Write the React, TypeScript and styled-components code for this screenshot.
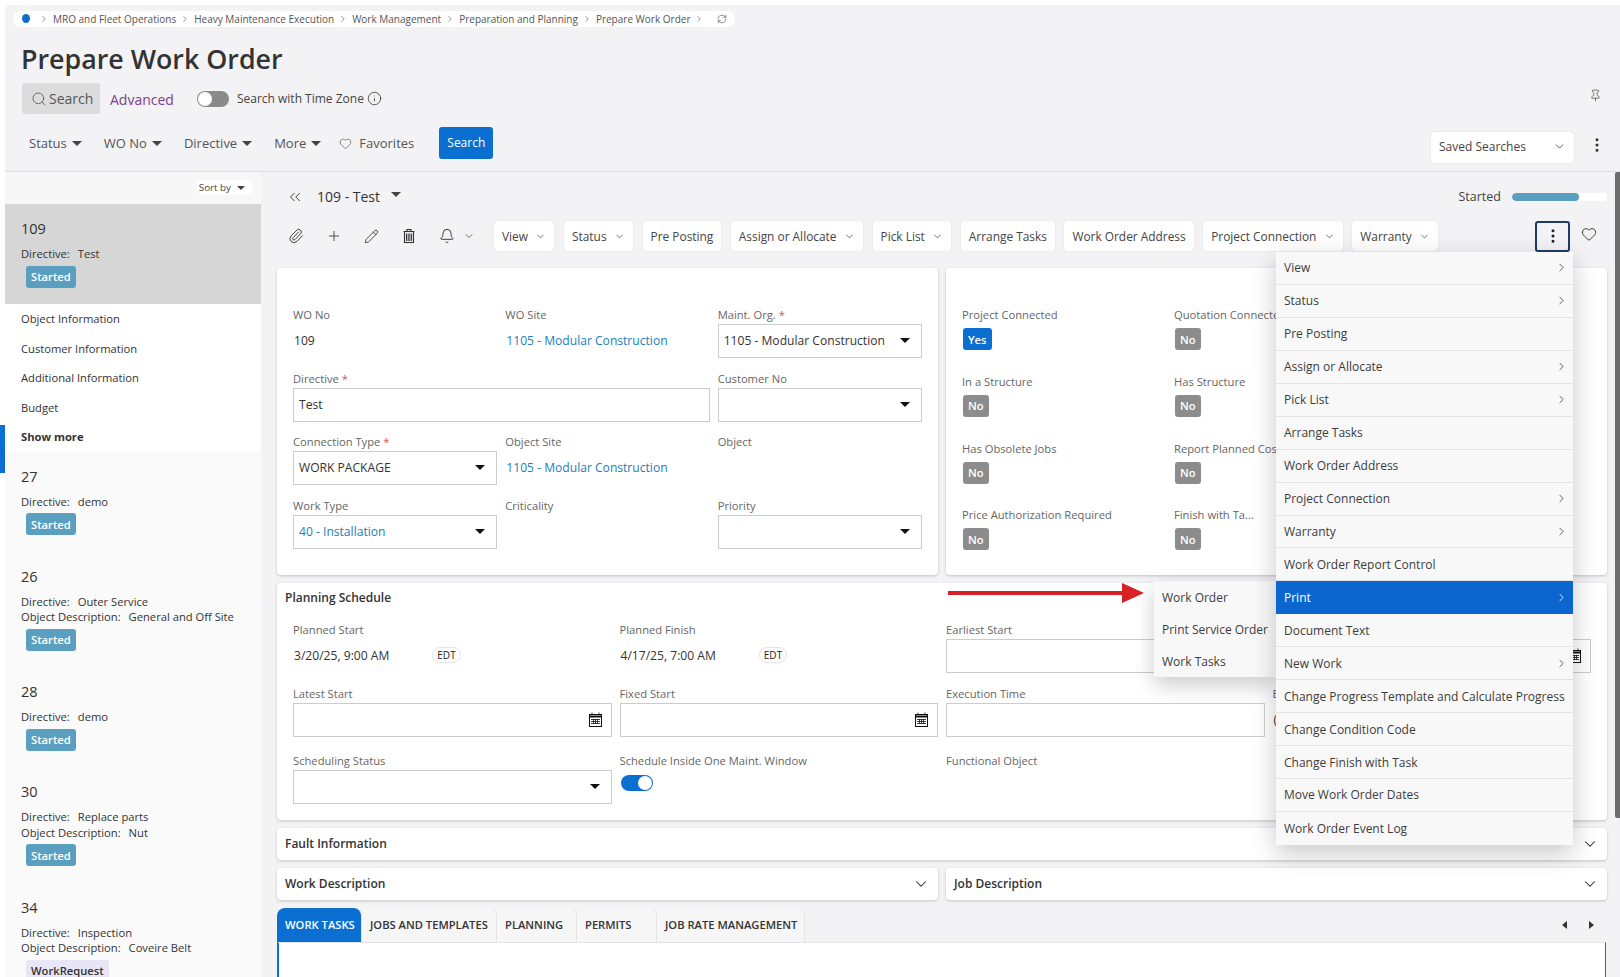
import React from "react";
import styled, {createGlobalStyle} from "styled-components";
import {
    Bell,
    ChevronDown,
    ChevronRight,
    ChevronsLeft,
    Heart,
    Info,
    MoreVertical,
    Paperclip,
    Pencil,
    Pin,
    Plus,
    RefreshCw,
    Search,
} from "lucide-react";

const GlobalStyle = createGlobalStyle`
    html, body {
        margin: 0;
        padding: 0;
        background: #fff;
        font-family: "Open Sans", "Liberation Sans", sans-serif;
        color: #333;
    }
    * {
        box-sizing: border-box;
    }
`;

const Page = styled.div`
    width: 1620px;
    height: 977px;
    padding: 5px 0 0 5px;
    overflow: hidden;
    background: #fff;
`;

const Frame = styled.div`
    position: relative;
    height: 972px;
    display: flex;
    flex-direction: column;
    background: #f3f2f5;
`;

/* header */

const Header = styled.header`
    height: 167px;
    flex: none;
    padding: 6px 0 0 8px;
    border-bottom: 1px solid #dcdcde;
`;

const Breadcrumb = styled.nav`
    display: flex;
    align-items: center;
    width: fit-content;
    height: 16px;
    padding: 0 8px 1px 9px;
    background: #fff;
    border-radius: 8px;
    font-size: 10px;
    color: #555;
    svg {
        color: #555;
    }
`;

const Dot = styled.span`
    width: 8px;
    height: 9px;
    border-radius: 50%;
    background: #0b6fd1;
    margin-right: 9px;
`;

const Crumb = styled.span`
    margin: 0 4px;
`;

const RefreshIcon = styled(RefreshCw)`
    margin-left: 13px;
`;

const Title = styled.h1`
    margin: 14px 0 0 8px;
    font-size: 26.8px;
    line-height: 36px;
    font-weight: 600;
    color: #333;
`;

const SearchRow = styled.div`
    display: flex;
    align-items: center;
    height: 31px;
    margin: 6px 0 0 9px;
    padding-right: 18px;
`;

const SearchTab = styled.div`
    display: flex;
    align-items: center;
    gap: 2px;
    width: 78px;
    height: 31px;
    padding-left: 9px;
    border-radius: 3px;
    background: #dcdcdc;
    font-size: 14px;
    color: #555;
`;

const Advanced = styled.span`
    margin: 2px 0 0 10px;
    font-size: 14px;
    color: #7b3f8c;
`;

const Toggle = styled.span<{$on?: boolean}>`
    display: flex;
    justify-content: ${(p) => (p.$on ? "flex-end" : "flex-start")};
    align-items: center;
    width: 32px;
    height: 16px;
    padding: 1px;
    border-radius: 8px;
    background: ${(p) => (p.$on ? "#0b6fd1" : "#8a8a8a")};
    &::after {
        content: "";
        width: 14px;
        height: 14px;
        border-radius: 50%;
        background: #fff;
    }
`;

const ZoneToggle = styled(Toggle)`
    margin-left: 23px;
`;

const ZoneLabel = styled.span`
    margin-left: 8px;
    font-size: 12px;
    color: #444;
`;

const InfoIcon = styled(Info)`
    margin-left: 3px;
    color: #333;
`;

const PinIcon = styled(Pin)`
    margin: -6px 0 0 auto;
    color: #555;
`;

const FilterRow = styled.div`
    display: flex;
    height: 35px;
    margin: 13px 0 0 16px;
    padding-right: 14px;
`;

const FilterItem = styled.div`
    display: flex;
    align-items: center;
    gap: 5px;
    height: 32px;
    margin-right: 22px;
    font-size: 13px;
    color: #555;
`;

const Caret = styled.span<{$size?: number; $color?: string}>`
    display: inline-block;
    flex: none;
    width: 0;
    height: 0;
    border-left: ${(p) => p.$size ?? 5}px solid transparent;
    border-right: ${(p) => p.$size ?? 5}px solid transparent;
    border-top: ${(p) => p.$size ?? 5}px solid ${(p) => p.$color ?? "#444"};
`;

const MoreItem = styled(FilterItem)`
    margin-right: 18px;
`;

const FavoriteItem = styled(FilterItem)`
    margin-right: 25px;
    gap: 7px;
`;

const PrimaryButton = styled.button`
    width: 54px;
    height: 32px;
    padding: 0 0 2px;
    border: 0;
    border-radius: 3px;
    background: #0b6fd1;
    color: #fff;
    font: 500 12px "Open Sans", sans-serif;
`;

const SavedSearches = styled.div`
    display: flex;
    align-items: center;
    justify-content: space-between;
    width: 143px;
    height: 31px;
    margin: 5px 0 0 auto;
    padding: 0 8px 2px 8px;
    background: #fff;
    border-radius: 3px;
    box-shadow: 0 0 1px rgba(0, 0, 0, 0.3);
    font-size: 12px;
    color: #444;
    svg {
        color: #333;
    }
`;

const HeaderKebab = styled(MoreVertical)`
    margin: 9px 0 0 14px;
    color: #333;
`;

/* sidebar */

const Body = styled.div`
    flex: 1;
    min-height: 0;
    display: flex;
`;

const Sidebar = styled.aside`
    position: relative;
    flex: none;
    width: 256px;
    background: #fafafa;
`;

const SidebarList = styled.div`
    height: 100%;
    overflow: hidden;
`;

const ScrollMark = styled.span`
    position: absolute;
    left: -5px;
    top: 253px;
    width: 5px;
    height: 48px;
    background: #0b6fd1;
`;

const SortRow = styled.div`
    display: flex;
    justify-content: flex-end;
    align-items: center;
    height: 32px;
    padding-right: 8px;
    background: #f7f7f8;
`;

const SortPill = styled.span`
    display: flex;
    align-items: center;
    gap: 6px;
    height: 15px;
    margin-top: -1px;
    padding: 0 8px 0 3px;
    border-radius: 8px;
    background: #fff;
    font-size: 9.8px;
    color: #444;
`;

const Record = styled.div<{$selected?: boolean}>`
    padding: 15px 0 16.5px 16px;
    background: ${(p) => (p.$selected ? "#d6d6d6" : "transparent")};
`;

const RecordNo = styled.div`
    font-size: 14.5px;
    line-height: 20px;
    margin-bottom: 7px;
    color: #333;
`;

const RecordLine = styled.div`
    display: flex;
    gap: 8px;
    font-size: 11.2px;
    line-height: 15.5px;
    color: #333;
`;

const Badge = styled.span<{$bg?: string; $fg?: string}>`
    display: inline-flex;
    align-items: center;
    height: 22px;
    padding: 0 5px;
    border-radius: 3px;
    background: ${(p) => p.$bg ?? "#5b9fc0"};
    color: ${(p) => p.$fg ?? "#fff"};
    font-size: 11.2px;
    font-weight: 600;
`;

const RecordBadge = styled(Badge)`
    margin: 4px 0 0 5px;
`;

const Details = styled.div`
    background: #fff;
`;

const DetailRow = styled.div<{$bold?: boolean}>`
    display: flex;
    align-items: center;
    height: 29.5px;
    padding-left: 16px;
    font-size: 11.2px;
    font-weight: ${(p) => (p.$bold ? 700 : 400)};
    color: #333;
`;

/* main */

const Main = styled.main`
    position: relative;
    flex: 1;
    min-width: 0;
    padding: 0 13px 0 16px;
`;

const Scrollbar = styled.span`
    position: absolute;
    right: 0;
    top: 0;
    width: 5px;
    height: 646px;
    border-radius: 2px 0 0 2px;
    background: #6d6d6d;
`;

const RecordHead = styled.div`
    display: flex;
    align-items: center;
    height: 49px;
    padding-left: 9px;
    color: #333;
`;

const RecordTitle = styled.span`
    margin-left: 13px;
    font-size: 14px;
    color: #333;
`;

const TitleCaret = styled(Caret)`
    margin-left: 11px;
    margin-top: -4px;
`;

const StateLabel = styled.span`
    margin-left: auto;
    font-size: 12.5px;
    color: #444;
`;

const Progress = styled.span`
    display: block;
    width: 95px;
    height: 8px;
    margin-left: 11px;
    border-radius: 4px;
    background: #fff;
    overflow: hidden;
`;

const ProgressFill = styled.span`
    display: block;
    height: 100%;
    border-radius: 4px;
    background: #5b9fc0;
`;

const Toolbar = styled.div`
    display: flex;
    align-items: center;
    height: 30px;
    padding: 0 10px 0 11px;
`;

const ToolIcons = styled.div`
    display: flex;
    align-items: center;
    gap: 22px;
    margin-right: 19px;
    color: #333;
`;

const BellGroup = styled.div`
    display: flex;
    align-items: center;
    gap: 8px;
`;

const ToolButton = styled.div`
    display: flex;
    align-items: center;
    gap: 7.5px;
    height: 30px;
    margin-right: 9.5px;
    padding: 0 8px;
    background: #fff;
    border-radius: 3px;
    box-shadow: 0 0 1px rgba(0, 0, 0, 0.25);
    font-size: 11.9px;
    color: #444;
    white-space: nowrap;
    svg {
        color: #333;
    }
`;

const KebabButton = styled.div`
    display: flex;
    align-items: center;
    justify-content: center;
    width: 35px;
    height: 31px;
    margin-left: auto;
    border: 2px solid #1d3b6c;
    border-radius: 3px;
    color: #222;
`;

const HeartButton = styled(Heart)`
    margin: -4px 0 0 11px;
    color: #333;
`;

const Stack = styled.div`
    display: flex;
    flex-direction: column;
    gap: 8px;
    margin-top: 17px;
`;

const TwoColumns = styled.div`
    display: grid;
    grid-template-columns: 1fr 1fr;
    gap: 8px;
`;

const Card = styled.section`
    background: #fff;
    border-radius: 4px;
    box-shadow: 0 1px 3px rgba(0, 0, 0, 0.2);
`;

const FormCard = styled(Card)`
    height: 307px;
    padding: 39px 16px 0 16px;
    display: grid;
    grid-template-columns: repeat(3, 1fr);
    grid-auto-rows: 63.5px;
    column-gap: 8px;
`;

const FlagCard = styled(Card)`
    height: 307px;
    padding: 39px 0 0 16px;
    display: grid;
    grid-template-columns: 212px 212px;
    grid-auto-rows: 66.8px;
`;

const Field = styled.div<{$span?: number}>`
    min-width: 0;
    grid-column: span ${(p) => p.$span ?? 1};
`;

const Label = styled.div`
    height: 17px;
    font-size: 11.2px;
    line-height: 16px;
    color: #666;
    white-space: nowrap;
    overflow: hidden;
`;

const Required = styled.span`
    margin-left: 3px;
    color: #d9534f;
`;

const InputBox = styled.div<{$link?: boolean}>`
    display: flex;
    align-items: center;
    justify-content: space-between;
    height: 34px;
    padding: 0 11px 1px 5px;
    border: 1px solid #ccc;
    background: #fff;
    font-size: 12.1px;
    color: ${(p) => (p.$link ? "#1b7fb8" : "#333")};
    white-space: nowrap;
`;

const DateBox = styled(InputBox)`
    padding-right: 8px;
`;

const PlainValue = styled.div<{$link?: boolean}>`
    display: flex;
    align-items: center;
    height: 34px;
    padding: 0 0 2px 1px;
    font-size: 12.1px;
    color: ${(p) => (p.$link ? "#1b7fb8" : "#333")};
    white-space: nowrap;
`;

const FlagBadge = styled(Badge)`
    margin: 4px 0 0 1px;
`;

const PlanningCard = styled(Card)`
    height: 237px;
    padding: 6px 16px 0 8px;
`;

const SectionTitle = styled.div`
    font-size: 12px;
    line-height: 18px;
    font-weight: 600;
    color: #333;
`;

const PlanningGrid = styled.div`
    display: grid;
    grid-template-columns: repeat(4, 1fr);
    grid-template-rows: 64px 67px 50px;
    column-gap: 8px;
    margin: 15px 0 0 8px;
`;

const Zone = styled.span`
    display: inline-flex;
    align-items: center;
    height: 16px;
    padding: 0 4px;
    margin-left: 43px;
    border: 1px solid #e4e4e4;
    border-radius: 8px;
    font-size: 10px;
    color: #222;
`;

const ScheduleToggle = styled(Toggle)`
    margin: 5px 0 0 1px;
`;

const Collapsed = styled(Card)`
    display: flex;
    align-items: center;
    justify-content: space-between;
    height: 32px;
    padding: 0 8px 0 8px;
    svg {
        color: #222;
    }
`;

const TabRow = styled.div`
    display: flex;
    align-items: center;
    height: 34px;
    padding-right: 13px;
`;

const Tab = styled.div<{$active?: boolean; $width: number}>`
    display: flex;
    align-items: center;
    width: ${(p) => p.$width}px;
    height: 34px;
    padding: 0 0 2px 8px;
    border-right: 1px solid #e4e4e6;
    border-radius: 8px 8px 0 0;
    background: ${(p) => (p.$active ? "#0b6fd1" : "#f6f6f7")};
    color: ${(p) => (p.$active ? "#fff" : "#333")};
    font-size: 11.2px;
    font-weight: 600;
    white-space: nowrap;
`;

const TabArrows = styled.div`
    display: flex;
    gap: 22px;
    margin-left: auto;
`;

const ArrowLeft = styled.span`
    border-top: 4px solid transparent;
    border-bottom: 4px solid transparent;
    border-right: 5px solid #333;
`;

const ArrowRight = styled.span`
    border-top: 4px solid transparent;
    border-bottom: 4px solid transparent;
    border-left: 5px solid #333;
`;

const TabPanel = styled.div`
    height: 60px;
    margin-right: 1px;
    background: #fff;
    border-left: 2px solid #0b6fd1;
    border-right: 1px solid #0b6fd1;
    border-top: 1px solid #e4e4e6;
`;

/* overlay menu */

const Menu = styled.ul`
    position: absolute;
    left: 1271px;
    top: 247px;
    width: 297px;
    margin: 0;
    padding: 0;
    list-style: none;
    background: #f8f8f8;
    box-shadow: 0 8px 24px rgba(0, 0, 0, 0.22);
`;

const MenuItem = styled.li<{$active?: boolean}>`
    display: flex;
    align-items: center;
    justify-content: space-between;
    height: 32.95px;
    padding: 0 5px 0 8px;
    border-bottom: 1px solid ${(p) => (p.$active ? "#0b66d0" : "#e3e3e3")};
    background: ${(p) => (p.$active ? "#0b66d0" : "transparent")};
    color: ${(p) => (p.$active ? "#fff" : "#3c3c3c")};
    font-size: 12px;
    white-space: nowrap;
    &:last-child {
        border-bottom: 0;
    }
`;

const SubMenu = styled.ul`
    position: absolute;
    left: 1149px;
    top: 576px;
    width: 122px;
    margin: 0;
    padding: 0;
    list-style: none;
    background: #f8f8f8;
    box-shadow: 0 8px 20px rgba(0, 0, 0, 0.2);
`;

const SubMenuItem = styled.li`
    display: flex;
    align-items: center;
    height: 32px;
    padding-left: 8px;
    font-size: 12px;
    color: #3c3c3c;
    white-space: nowrap;
`;

const RedArrow = styled.svg`
    position: absolute;
    left: 943px;
    top: 577px;
`;

function CalendarIcon() {
    return (
        <svg width="15" height="15" viewBox="0 0 15 15" fill="none" stroke="#111">
            <rect x="1.5" y="2.5" width="12" height="12" />
            <path d="M1.5 4.5h12" strokeWidth="2" />
            <path d="M4 0.5v2M11 0.5v2M3 7.5h9M3 9.5h9M3 11.5h9M5.5 7v5M7.5 7v5M9.5 7v5" strokeWidth="0.8" />
        </svg>
    );
}

function TrashIcon() {
    return (
        <svg width="16" height="16" viewBox="0 0 16 16" fill="none" stroke="currentColor" strokeWidth="1.1">
            <path d="M2.5 3.5h11M6 3.5V1.5h4v2" />
            <rect x="3.5" y="3.5" width="9" height="11" />
            <path d="M5.5 5.5v7.5M7.2 5.5v7.5M8.9 5.5v7.5M10.6 5.5v7.5" strokeWidth="1" />
        </svg>
    );
}

const records = [
    {no: "27", lines: [["Directive:", "demo"]], badge: "Started"},
    {
        no: "26",
        lines: [
            ["Directive:", "Outer Service"],
            ["Object Description:", "General and Off Site"],
        ],
        badge: "Started",
    },
    {no: "28", lines: [["Directive:", "demo"]], badge: "Started"},
    {
        no: "30",
        lines: [
            ["Directive:", "Replace parts"],
            ["Object Description:", "Nut"],
        ],
        badge: "Started",
    },
    {
        no: "34",
        lines: [
            ["Directive:", "Inspection"],
            ["Object Description:", "Coveire Belt"],
        ],
        badge: "WorkRequest",
    },
];

const crumbs = [
    "MRO and Fleet Operations",
    "Heavy Maintenance Execution",
    "Work Management",
    "Preparation and Planning",
    "Prepare Work Order",
];

const toolButtons = [
    {label: "View", more: true},
    {label: "Status", more: true},
    {label: "Pre Posting"},
    {label: "Assign or Allocate", more: true},
    {label: "Pick List", more: true},
    {label: "Arrange Tasks"},
    {label: "Work Order Address"},
    {label: "Project Connection", more: true},
    {label: "Warranty", more: true},
];

const flags = [
    {label: "Project Connected", yes: true},
    {label: "Quotation Connected"},
    {label: "In a Structure"},
    {label: "Has Structure"},
    {label: "Has Obsolete Jobs"},
    {label: "Report Planned Cost"},
    {label: "Price Authorization Required"},
    {label: "Finish with Ta..."},
];

const menuItems = [
    {label: "View", more: true},
    {label: "Status", more: true},
    {label: "Pre Posting"},
    {label: "Assign or Allocate", more: true},
    {label: "Pick List", more: true},
    {label: "Arrange Tasks"},
    {label: "Work Order Address"},
    {label: "Project Connection", more: true},
    {label: "Warranty", more: true},
    {label: "Work Order Report Control"},
    {label: "Print", more: true, active: true},
    {label: "Document Text"},
    {label: "New Work", more: true},
    {label: "Change Progress Template and Calculate Progress"},
    {label: "Change Condition Code"},
    {label: "Change Finish with Task"},
    {label: "Move Work Order Dates"},
    {label: "Work Order Event Log"},
];

function App() {
    return (
        <Page>
            <GlobalStyle />
            <Frame>
                <Header>
                    <Breadcrumb>
                        <Dot />
                        {crumbs.map((c) => (
                            <React.Fragment key={c}>
                                <ChevronRight size={10} strokeWidth={1.5} />
                                <Crumb>{c}</Crumb>
                            </React.Fragment>
                        ))}
                        <ChevronRight size={10} strokeWidth={1.5} />
                        <RefreshIcon size={10} strokeWidth={1.5} />
                    </Breadcrumb>
                    <Title>Prepare Work Order</Title>
                    <SearchRow>
                        <SearchTab>
                            <Search size={16} strokeWidth={1.25} />
                            Search
                        </SearchTab>
                        <Advanced>Advanced</Advanced>
                        <ZoneToggle />
                        <ZoneLabel>Search with Time Zone</ZoneLabel>
                        <InfoIcon size={15} strokeWidth={1.25} />
                        <PinIcon size={13} strokeWidth={1.5} />
                    </SearchRow>
                    <FilterRow>
                        <FilterItem>
                            Status <Caret />
                        </FilterItem>
                        <FilterItem>
                            WO No <Caret />
                        </FilterItem>
                        <FilterItem>
                            Directive <Caret />
                        </FilterItem>
                        <MoreItem>
                            More <Caret />
                        </MoreItem>
                        <FavoriteItem>
                            <Heart size={13} strokeWidth={1.25} />
                            Favorites
                        </FavoriteItem>
                        <PrimaryButton>Search</PrimaryButton>
                        <SavedSearches>
                            Saved Searches
                            <ChevronDown size={13} strokeWidth={1.5} />
                        </SavedSearches>
                        <HeaderKebab size={18} strokeWidth={2} />
                    </FilterRow>
                </Header>
                <Body>
                    <Sidebar>
                        <ScrollMark />
                        <SidebarList>
                            <SortRow>
                                <SortPill>
                                    Sort by <Caret $size={4} />
                                </SortPill>
                            </SortRow>
                            <Record $selected>
                                <RecordNo>109</RecordNo>
                                <RecordLine>
                                    <span>Directive:</span>
                                    <span>Test</span>
                                </RecordLine>
                                <RecordBadge>Started</RecordBadge>
                            </Record>
                            <Details>
                                <DetailRow>Object Information</DetailRow>
                                <DetailRow>Customer Information</DetailRow>
                                <DetailRow>Additional Information</DetailRow>
                                <DetailRow>Budget</DetailRow>
                                <DetailRow $bold>Show more</DetailRow>
                            </Details>
                            {records.map((r) => (
                                <Record key={r.no}>
                                    <RecordNo>{r.no}</RecordNo>
                                    {r.lines.map(([k, v]) => (
                                        <RecordLine key={k}>
                                            <span>{k}</span>
                                            <span>{v}</span>
                                        </RecordLine>
                                    ))}
                                    {r.badge === "Started" ? (
                                        <RecordBadge>{r.badge}</RecordBadge>
                                    ) : (
                                        <RecordBadge $bg="#e8e6f6" $fg="#333">
                                            {r.badge}
                                        </RecordBadge>
                                    )}
                                </Record>
                            ))}
                        </SidebarList>
                    </Sidebar>
                    <Main>
                        <Scrollbar />
                        <RecordHead>
                            <ChevronsLeft size={18} strokeWidth={1.25} />
                            <RecordTitle>109 - Test</RecordTitle>
                            <TitleCaret />
                            <StateLabel>Started</StateLabel>
                            <Progress>
                                <ProgressFill style={{width: "71%"}} />
                            </Progress>
                        </RecordHead>
                        <Toolbar>
                            <ToolIcons>
                                <Paperclip size={16} strokeWidth={1.4} />
                                <Plus size={16} strokeWidth={1.25} />
                                <Pencil size={15} strokeWidth={1.4} />
                                <TrashIcon />
                                <BellGroup>
                                    <Bell size={16} strokeWidth={1.4} />
                                    <ChevronDown size={12} strokeWidth={1.4} />
                                </BellGroup>
                            </ToolIcons>
                            {toolButtons.map((b) => (
                                <ToolButton key={b.label}>
                                    {b.label}
                                    {b.more && <ChevronDown size={11} strokeWidth={1.5} />}
                                </ToolButton>
                            ))}
                            <KebabButton>
                                <MoreVertical size={18} strokeWidth={2} />
                            </KebabButton>
                            <HeartButton size={16} strokeWidth={1.4} />
                        </Toolbar>
                        <Stack>
                            <TwoColumns>
                                <FormCard>
                                    <Field>
                                        <Label>WO No</Label>
                                        <PlainValue>109</PlainValue>
                                    </Field>
                                    <Field>
                                        <Label>WO Site</Label>
                                        <PlainValue $link>1105 - Modular Construction</PlainValue>
                                    </Field>
                                    <Field>
                                        <Label>
                                            Maint. Org.<Required>*</Required>
                                        </Label>
                                        <InputBox>
                                            1105 - Modular Construction
                                            <Caret $size={5} $color="#111" />
                                        </InputBox>
                                    </Field>
                                    <Field $span={2}>
                                        <Label>
                                            Directive<Required>*</Required>
                                        </Label>
                                        <InputBox>Test</InputBox>
                                    </Field>
                                    <Field>
                                        <Label>Customer No</Label>
                                        <InputBox>
                                            <span />
                                            <Caret $size={5} $color="#111" />
                                        </InputBox>
                                    </Field>
                                    <Field>
                                        <Label>
                                            Connection Type<Required>*</Required>
                                        </Label>
                                        <InputBox>
                                            WORK PACKAGE
                                            <Caret $size={5} $color="#111" />
                                        </InputBox>
                                    </Field>
                                    <Field>
                                        <Label>Object Site</Label>
                                        <PlainValue $link>1105 - Modular Construction</PlainValue>
                                    </Field>
                                    <Field>
                                        <Label>Object</Label>
                                    </Field>
                                    <Field>
                                        <Label>Work Type</Label>
                                        <InputBox $link>
                                            40 - Installation
                                            <Caret $size={5} $color="#111" />
                                        </InputBox>
                                    </Field>
                                    <Field>
                                        <Label>Criticality</Label>
                                    </Field>
                                    <Field>
                                        <Label>Priority</Label>
                                        <InputBox>
                                            <span />
                                            <Caret $size={5} $color="#111" />
                                        </InputBox>
                                    </Field>
                                </FormCard>
                                <FlagCard>
                                    {flags.map((f) => (
                                        <Field key={f.label}>
                                            <Label>{f.label}</Label>
                                            {f.yes ? (
                                                <FlagBadge $bg="#0b6fd1">Yes</FlagBadge>
                                            ) : (
                                                <FlagBadge $bg="#8c8c8c">No</FlagBadge>
                                            )}
                                        </Field>
                                    ))}
                                </FlagCard>
                            </TwoColumns>
                            <PlanningCard>
                                <SectionTitle>Planning Schedule</SectionTitle>
                                <PlanningGrid>
                                    <Field>
                                        <Label>Planned Start</Label>
                                        <PlainValue>
                                            3/20/25, 9:00 AM
                                            <Zone>EDT</Zone>
                                        </PlainValue>
                                    </Field>
                                    <Field>
                                        <Label>Planned Finish</Label>
                                        <PlainValue>
                                            4/17/25, 7:00 AM
                                            <Zone>EDT</Zone>
                                        </PlainValue>
                                    </Field>
                                    <Field>
                                        <Label>Earliest Start</Label>
                                        <DateBox>
                                            <span />
                                            <CalendarIcon />
                                        </DateBox>
                                    </Field>
                                    <Field>
                                        <Label />
                                        <DateBox>
                                            <span />
                                            <CalendarIcon />
                                        </DateBox>
                                    </Field>
                                    <Field>
                                        <Label>Latest Start</Label>
                                        <DateBox>
                                            <span />
                                            <CalendarIcon />
                                        </DateBox>
                                    </Field>
                                    <Field>
                                        <Label>Fixed Start</Label>
                                        <DateBox>
                                            <span />
                                            <CalendarIcon />
                                        </DateBox>
                                    </Field>
                                    <Field>
                                        <Label>Execution Time</Label>
                                        <InputBox />
                                    </Field>
                                    <Field>
                                        <Label>E</Label>
                                        <PlainValue>(</PlainValue>
                                    </Field>
                                    <Field>
                                        <Label>Scheduling Status</Label>
                                        <InputBox>
                                            <span />
                                            <Caret $size={5} $color="#111" />
                                        </InputBox>
                                    </Field>
                                    <Field>
                                        <Label>Schedule Inside One Maint. Window</Label>
                                        <ScheduleToggle $on />
                                    </Field>
                                    <Field>
                                        <Label>Functional Object</Label>
                                    </Field>
                                </PlanningGrid>
                            </PlanningCard>
                            <Collapsed>
                                <SectionTitle>Fault Information</SectionTitle>
                                <ChevronDown size={18} strokeWidth={1.4} />
                            </Collapsed>
                            <TwoColumns>
                                <Collapsed>
                                    <SectionTitle>Work Description</SectionTitle>
                                    <ChevronDown size={18} strokeWidth={1.4} />
                                </Collapsed>
                                <Collapsed>
                                    <SectionTitle>Job Description</SectionTitle>
                                    <ChevronDown size={18} strokeWidth={1.4} />
                                </Collapsed>
                            </TwoColumns>
                            <div>
                                <TabRow>
                                    <Tab $active $width={85}>
                                        WORK TASKS
                                    </Tab>
                                    <Tab $width={135}>JOBS AND TEMPLATES</Tab>
                                    <Tab $width={80}>PLANNING</Tab>
                                    <Tab $width={80}>PERMITS</Tab>
                                    <Tab $width={148}>JOB RATE MANAGEMENT</Tab>
                                    <TabArrows>
                                        <ArrowLeft />
                                        <ArrowRight />
                                    </TabArrows>
                                </TabRow>
                                <TabPanel />
                            </div>
                        </Stack>
                    </Main>
                </Body>
                <RedArrow width="196" height="22" viewBox="0 0 196 22">
                    <path d="M0 9h174V1l22 10-22 10v-8H0z" fill="#d92027" />
                </RedArrow>
                <SubMenu>
                    <SubMenuItem>Work Order</SubMenuItem>
                    <SubMenuItem>Print Service Order</SubMenuItem>
                    <SubMenuItem>Work Tasks</SubMenuItem>
                </SubMenu>
                <Menu>
                    {menuItems.map((m) => (
                        <MenuItem key={m.label} $active={m.active}>
                            {m.label}
                            {m.more && <ChevronRight size={13} strokeWidth={1.5} />}
                        </MenuItem>
                    ))}
                </Menu>
            </Frame>
        </Page>
    );
}

export default App;
